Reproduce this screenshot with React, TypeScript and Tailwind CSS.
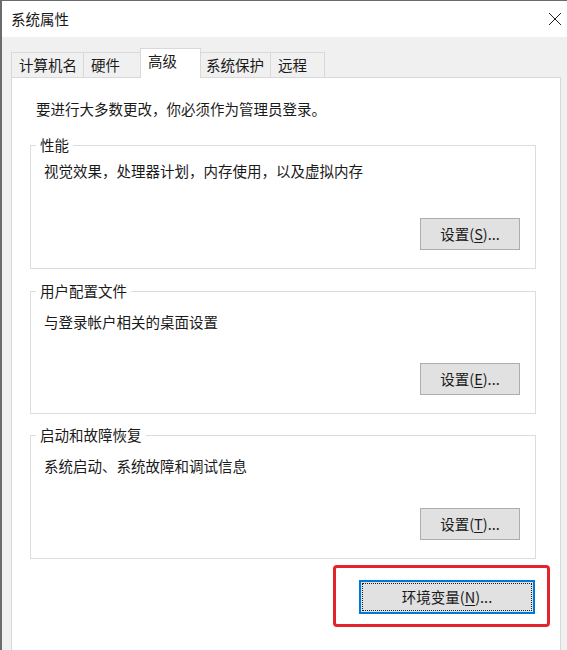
import React from "react";

function Btn({ label, k }: { label: string; k: string }) {
  return (
    <div className="w-[100px] h-[32px] bg-[#e1e1e1] border border-[#adadad] flex items-center justify-center">
      <span>
        {label}(<span className="underline underline-offset-2">{k}</span>)...
      </span>
    </div>
  );
}

function Group({
  title,
  text,
  k,
  className,
  textMt,
  btnMt,
}: {
  title: string;
  text: string;
  k: string;
  className: string;
  textMt: string;
  btnMt: string;
}) {
  return (
    <fieldset className={`border border-[#dcdcdc] w-[506px] ml-[18px] p-0 min-w-0 ${className}`}>
      <legend className="ml-[5px] px-[4px]">{title}</legend>
      <div className={`pl-[13px] ${textMt}`}>{text}</div>
      <div className={`flex justify-end pr-[15px] pb-[18px] ${btnMt}`}>
        <Btn label="设置" k={k} />
      </div>
    </fieldset>
  );
}

export default function App() {
  const tabs = [
    { t: "计算机名", w: "w-[72px]", cls: "border-l" },
    { t: "硬件", w: "w-[57px]", cls: "border-l" },
  ];
  return (
    <div className="w-[567px] h-[650px] overflow-hidden bg-[#f0f0f0] border-l-2 border-t border-[#6b6b6b] flex flex-col text-[14.5px] leading-[20px] text-[#1a1a1a] font-['Noto_Sans_CJK_SC',sans-serif]">
      <div className="h-[36px] shrink-0 bg-white flex items-center justify-between pl-[9px] pr-[5px]">
        <span>系统属性</span>
        <svg width="14" height="14" viewBox="0 0 14 14">
          <path d="M1 1L13 13M13 1L1 13" stroke="#222" strokeWidth="1" fill="none" />
        </svg>
      </div>

      <div className="flex items-end pl-[9px] mt-[11px] h-[29px] shrink-0 relative z-10">
        {tabs.map((tb) => (
          <div
            key={tb.t}
            className={`${tb.w} h-[25px] border-t ${tb.cls} border-[#d9d9d9] pl-[7px] flex items-center`}
          >
            {tb.t}
          </div>
        ))}
        <div className="w-[61px] h-[30px] -mb-px bg-white border-t border-l border-r border-[#d9d9d9] pl-[7px] pt-[2px]">
          高级
        </div>
        <div className="w-[69px] h-[25px] border-t border-[#d9d9d9] pl-[5px] flex items-center">
          系统保护
        </div>
        <div className="w-[55px] h-[25px] border-t border-l border-r border-[#d9d9d9] pl-[7px] flex items-center">
          远程
        </div>
      </div>

      <div className="ml-[9px] w-[550px] flex-1 bg-white border border-b-0 border-[#d9d9d9] pt-[21px] flex flex-col">
        <div className="pl-[24px]">要进行大多数更改，你必须作为管理员登录。</div>

        <Group
          title="性能"
          text="视觉效果，处理器计划，内存使用，以及虚拟内存"
          k="S"
          className="mt-[16px]"
          textMt="mt-[6px]"
          btnMt="mt-[37px]"
        />
        <Group
          title="用户配置文件"
          text="与登录帐户相关的桌面设置"
          k="E"
          className="mt-[12px]"
          textMt="mt-[11px]"
          btnMt="mt-[31px]"
        />
        <Group
          title="启动和故障恢复"
          text="系统启动、系统故障和调试信息"
          k="T"
          className="mt-[11px]"
          textMt="mt-[11px]"
          btnMt="mt-[32px]"
        />

        <div className="flex justify-end mr-[10px] mt-[6px]">
          <div className="w-[217px] h-[62px] border-[3px] border-[#e3242b] rounded-[4px] flex justify-end items-start pt-[12px] pr-[12px]">
            <div className="w-[176px] h-[34px] bg-[#e1e1e1] border-2 border-[#0078d7] p-px">
              <div className="w-full h-full border border-dotted border-[#222] flex items-center justify-center">
                <span>
                  环境变量(<span className="underline underline-offset-2">N</span>)...
                </span>
              </div>
            </div>
          </div>
        </div>
      </div>
    </div>
  );
}
